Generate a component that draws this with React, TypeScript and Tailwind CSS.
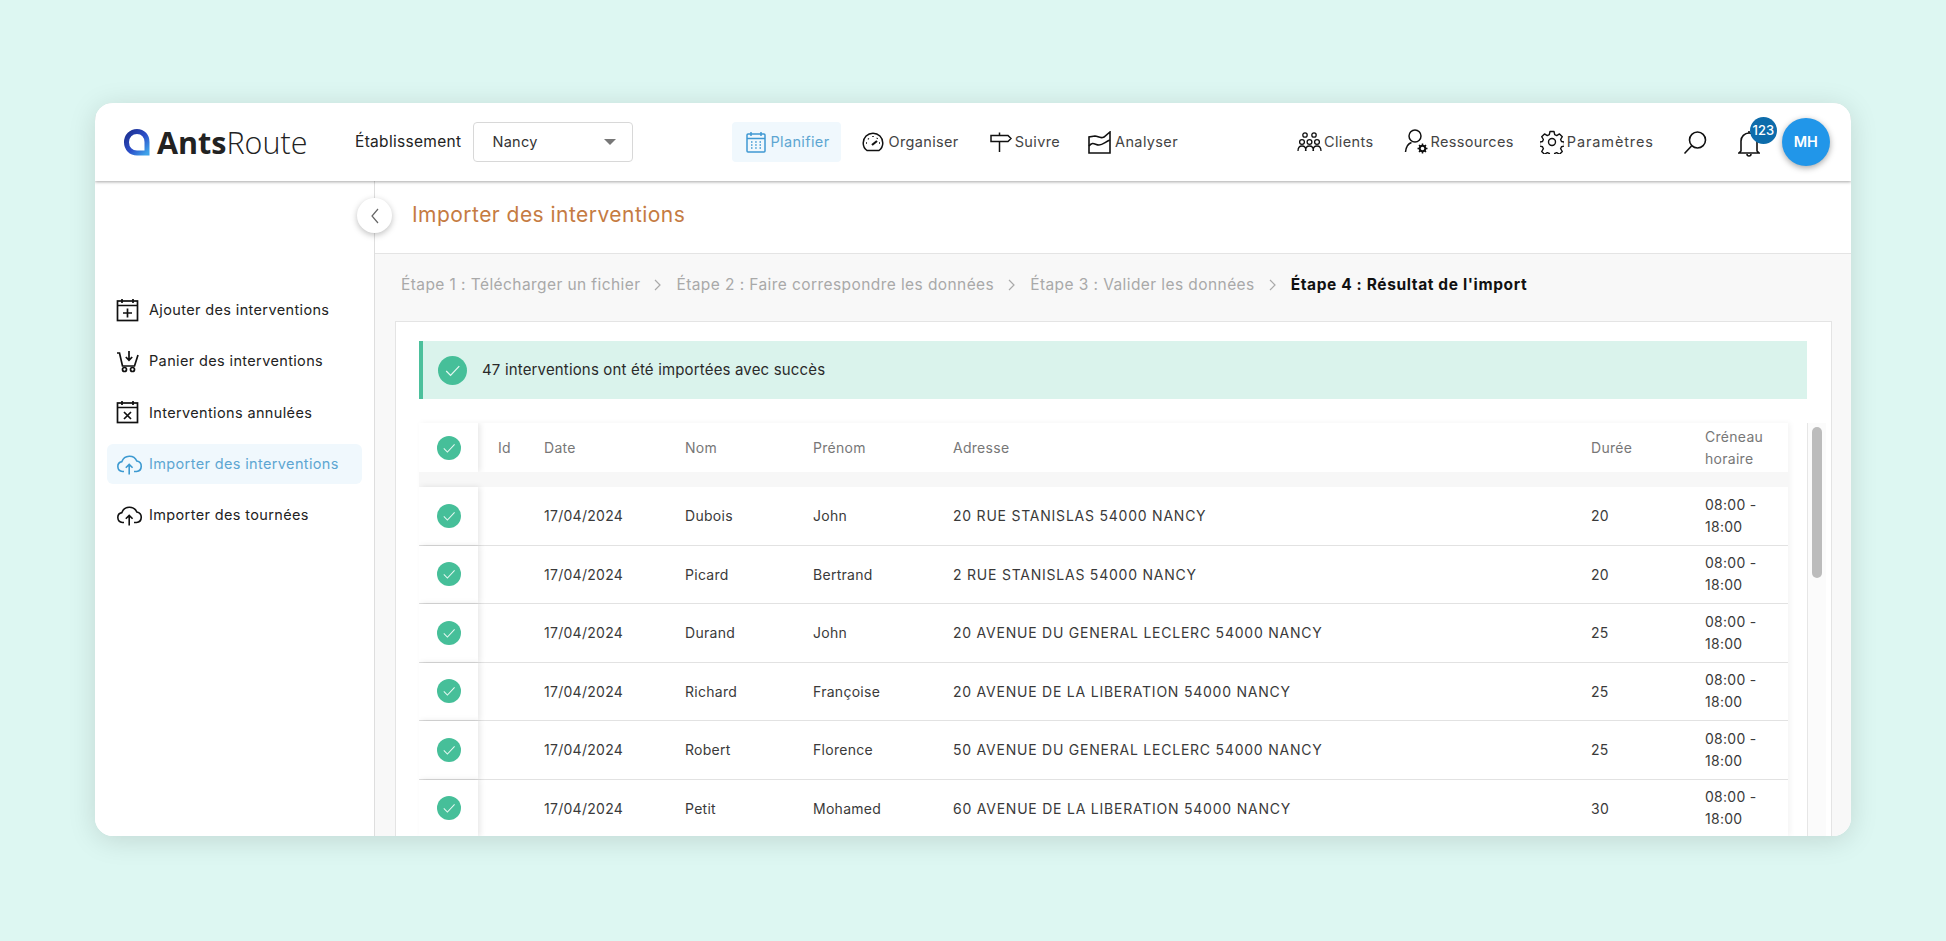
import React from "react";

const rows = [
  ["Dubois", "John", "20 RUE STANISLAS 54000 NANCY", "20"],
  ["Picard", "Bertrand", "2 RUE STANISLAS 54000 NANCY", "20"],
  ["Durand", "John", "20 AVENUE DU GENERAL LECLERC 54000 NANCY", "25"],
  ["Richard", "Françoise", "20 AVENUE DE LA LIBERATION 54000 NANCY", "25"],
  ["Robert", "Florence", "50 AVENUE DU GENERAL LECLERC 54000 NANCY", "25"],
  ["Petit", "Mohamed", "60 AVENUE DE LA LIBERATION 54000 NANCY", "30"],
];

function Check({ size }: { size: number }) {
  return (
    <svg width={size} height={size} viewBox="0 0 30 30" className="shrink-0">
      <circle cx="15" cy="15" r="15" fill="#46bf99" />
      <path d="M8.5 15.5l4.5 4.5 9-9.5" fill="none" stroke="#e6f8f2" strokeWidth="1.3" />
    </svg>
  );
}

function Logo() {
  return (
    <svg width="29" height="29" viewBox="0 0 29 29" className="shrink-0">
      <defs>
        <linearGradient id="lg" x1="0" y1="0" x2="1" y2="1">
          <stop offset="0" stopColor="#1c2f8f" />
          <stop offset="0.55" stopColor="#2c4fc9" />
          <stop offset="1" stopColor="#3fa3ea" />
        </linearGradient>
      </defs>
      <path
        d="M14 3.500c6 0 10 4.500 10 10.500v11H14C8 25 3.500 20.500 3.500 14.300 3.500 8 8 3.500 14 3.500z"
        fill="none"
        stroke="url(#lg)"
        strokeWidth="5"
      />
    </svg>
  );
}

const Cal = ({ children, color = "#111" }: { children: React.ReactNode; color?: string }) => (
  <svg width="23" height="24" viewBox="0 0 23 24" fill="none" stroke={color} strokeWidth="1.7" className="shrink-0">
    <rect x="1.500" y="3" width="20" height="19.500" />
    <path d="M1.500 7.500h20M6 1v4M17 1v4" />
    {children}
  </svg>
);

const CloudUp = ({ color }: { color: string }) => (
  <svg width="27" height="22" viewBox="0 0 27 22" fill="none" stroke={color} strokeWidth="1.6" className="shrink-0">
    <path d="M8 18.500H6.500a5 5 0 0 1-.6-9.900A8 8 0 0 1 20.800 8a5.300 5.300 0 0 1-.3 10.500H18" />
    <path d="M13.200 21.500V11.500M9.800 14.800l3.400-3.400 3.400 3.400" />
  </svg>
);

const sideItems: { label: string; icon: React.ReactNode; active?: boolean }[] = [
  { label: "Ajouter des interventions", icon: <Cal><path d="M11.500 10.500v9M7 15h9" /></Cal> },
  {
    label: "Panier des interventions",
    icon: (
      <svg width="24" height="24" viewBox="0 0 24 24" fill="none" stroke="#111" strokeWidth="1.7" className="shrink-0">
        <path d="M1 4h2.500l3 13h12l3.500-11" />
        <path d="M13 2v9M9.800 8l3.200 3.200L16.200 8" />
        <circle cx="8.500" cy="20.500" r="2" />
        <circle cx="16.500" cy="20.500" r="2" />
      </svg>
    ),
  },
  { label: "Interventions annulées", icon: <Cal><path d="M8 12l7 7M15 12l-7 7" /></Cal> },
  { label: "Importer des interventions", icon: <CloudUp color="#3d9ad1" />, active: true },
  { label: "Importer des tournées", icon: <CloudUp color="#111" /> },
];

const NavText = ({ children, className = "tracking-[0.025em] text-[#444]" }: { children: React.ReactNode; className?: string }) => (
  <span className={`text-[14.500px] ${className}`}>{children}</span>
);

function Header() {
  return (
    <header className="relative z-20 flex h-[78px] shrink-0 items-center bg-white pl-[28px] shadow-[0_1px_3px_rgba(0,0,0,0.35)]">
      <div className="flex w-[232px] items-center gap-[5px]">
        <Logo />
        <span className="font-['Open_Sans',sans-serif] text-[30.500px] leading-none text-[#222]">
          <span className="font-bold">Ants</span>
          <span className="font-light">Route</span>
        </span>
      </div>
      <span className="text-[15.500px] tracking-[0.02em] text-[#222]">Établissement</span>
      <div className="ml-[12px] flex h-[40px] w-[160px] items-center justify-between rounded border border-[#d8d8d8] pl-[18px] pr-[16px] text-[14.500px] tracking-[0.02em] text-[#333]">
        Nancy
        <span className="h-0 w-0 border-x-[6px] border-t-[6px] border-x-transparent border-t-[#777]" />
      </div>
      <div className="ml-[99px] flex h-[40px] w-[109px] items-center gap-[4px] rounded bg-[#f0f8fd] pl-[14px]">
        <svg width="20" height="22" viewBox="0 0 20 22" fill="none" stroke="#3f98d2" strokeWidth="1.500" className="shrink-0">
          <rect x="1" y="3" width="18" height="18" rx="1" />
          <path d="M1 7.500h18M5 1v4M15 1v4" />
          <path d="M5 11h1.500M9.200 11h1.500M13.500 11h1.500M5 14h1.500M9.200 14h1.500M13.500 14h1.500M5 17h1.500M9.200 17h1.500M13.500 17h1.500" />
        </svg>
        <NavText className="tracking-[0.025em] text-[#5da6d2]">Planifier</NavText>
      </div>
      <div className="ml-[21px] flex items-center gap-[4px]">
        <svg width="22" height="20" viewBox="0 0 22 20" fill="none" stroke="#111" strokeWidth="1.500" className="shrink-0">
          <path d="M5 18.500h12c2-1.500 3.800-4 3.800-7.500a9.800 9.800 0 0 0-19.600 0c0 3.500 1.700 6 3.800 7.500z" />
          <path d="M10 13l5-4" strokeWidth="2.200" />
          <path d="M4 11h1M17 11h1M6 6.500l.8.800M11 4v1M15.500 6l-.6.800" />
        </svg>
        <NavText>Organiser</NavText>
      </div>
      <div className="ml-[31px] flex items-center gap-[3px]">
        <svg width="22" height="22" viewBox="0 0 22 22" fill="none" stroke="#111" strokeWidth="1.500" className="shrink-0">
          <path d="M1 4.500h17l3 3-3 3H1z" />
          <path d="M9.500 1.500v3M9.500 10.500V21" />
        </svg>
        <NavText>Suivre</NavText>
      </div>
      <div className="ml-[28px] flex items-center gap-[4px]">
        <svg width="23" height="23" viewBox="0 0 23 23" fill="none" stroke="#111" strokeWidth="1.600" className="shrink-0">
          <path d="M1 6v16h21V1L16 6c-4 2-6-1-9-1z" />
          <path d="M1 15c4-5 6-1 10-1s6-3 11-5" />
        </svg>
        <NavText>Analyser</NavText>
      </div>
      <div className="ml-[119px] flex items-center gap-[2px]">
        <svg width="25" height="20" viewBox="0 0 25 20" fill="none" stroke="#111" strokeWidth="1.300" className="shrink-0">
          <circle cx="8" cy="3" r="2.200" />
          <circle cx="17" cy="3" r="2.200" />
          <circle cx="5" cy="10" r="2.400" />
          <circle cx="12.500" cy="10" r="2.400" />
          <circle cx="20" cy="10" r="2.400" />
          <path d="M1 19c0-3 1.500-5 4-5s4 2 4 5M8.500 19c0-3 1.500-5 4-5s4 2 4 5M16 19c0-3 1.500-5 4-5s4 2 4 5" />
        </svg>
        <NavText>Clients</NavText>
      </div>
      <div className="ml-[31px] flex items-center gap-0">
        <svg width="26" height="28" viewBox="0 0 26 28" fill="none" stroke="#111" strokeWidth="1.500" className="shrink-0">
          <circle cx="11" cy="8" r="6" />
          <path d="M1.500 24c.5-5 3-8.500 6-9.500" />
          <circle cx="18.500" cy="20.500" r="2.800" strokeWidth="2" />
          <path d="M18.500 15.500v2M18.500 23.500v2M13.500 20.500h2M21.500 20.500h2M15 17l1.400 1.400M20.600 22.600L22 24M15 24l1.400-1.400M20.600 18.400L22 17" />
        </svg>
        <NavText>Ressources</NavText>
      </div>
      <div className="ml-[26px] flex items-center gap-[3px]">
        <svg width="24" height="24" viewBox="0 0 24 24" fill="none" stroke="#111" strokeWidth="1.400" strokeLinejoin="round" className="shrink-0">
          <circle cx="12" cy="12" r="3.500" />
          <path d="M10 1.500h4l.7 3.200 2 .9 2.800-1.700 2.800 2.800-1.700 2.800.9 2 3 .7v3.800l-3 .7-.9 2 1.700 2.800-2.800 2.800-2.800-1.700-2 .9-.7 3.200h-4l-.7-3.200-2-.9-2.800 1.700-2.800-2.800 1.700-2.800-.9-2-3-.7v-3.800l3-.7.9-2-1.700-2.800 2.800-2.800 2.800 1.700 2-.9z" />
        </svg>
        <NavText className="tracking-[0.06em] text-[#444]">Paramètres</NavText>
      </div>
      <svg width="25" height="25" viewBox="0 0 25 25" fill="none" stroke="#111" strokeWidth="1.600" className="ml-[29px] shrink-0">
        <circle cx="14.500" cy="10" r="8" />
        <path d="M8.500 16L1.500 23.500" />
      </svg>
      <div className="relative ml-[30px] h-[28px] w-[22px] shrink-0">
        <svg width="22" height="28" viewBox="0 0 22 28" fill="none" stroke="#111" strokeWidth="1.600" className="mt-[2px]">
          <path d="M3 21V11a8 8 0 0 1 16 0v10l2 2H1z" />
          <path d="M11 1v2M9 24a2 2 0 0 0 4 0" />
        </svg>
        <span className="absolute left-[12px] top-[-11px] flex h-[27px] w-[27px] items-center justify-center rounded-full bg-[#0d6cab] text-[13px] font-medium text-white">
          123
        </span>
      </div>
      <div className="ml-[22px] flex h-[48px] w-[48px] shrink-0 items-center justify-center rounded-full bg-[#2196e9] text-[14.500px] font-semibold text-white shadow-[0_2px_6px_rgba(0,0,0,0.35)]">
        MH
      </div>
    </header>
  );
}

function Sidebar() {
  return (
    <aside className="flex w-[280px] shrink-0 flex-col gap-[11.200px] border-r border-[#dedede] bg-white pl-[12px] pr-[12px] pt-[109px]">
      {sideItems.map((it) => (
        <div
          key={it.label}
          className={`flex h-[40px] items-center rounded-md pl-[9px] ${it.active ? "bg-[#f0f8fd]" : ""}`}
        >
          <span className="flex w-[33px] shrink-0 items-center">{it.icon}</span>
          <span className={`whitespace-nowrap text-[14.500px] tracking-[0.025em] ${it.active ? "text-[#5da6d2]" : "text-[#222]"}`}>
            {it.label}
          </span>
        </div>
      ))}
    </aside>
  );
}

const Chevron = () => (
  <svg width="12" height="14" viewBox="0 0 12 14" fill="none" stroke="#aaa" strokeWidth="1.200" className="shrink-0">
    <path d="M3 2l5 5-5 5" />
  </svg>
);

const Row = ({ head, cols }: { head?: boolean; cols: React.ReactNode[] }) => (
  <div className={`flex shrink-0 items-center ${head ? "h-[49px] text-[#777]" : "h-[58.500px] border-b border-[#e2e2e2] text-[#3a3a3a]"}`}>
    <div className="flex h-full w-[59px] shrink-0 items-center justify-center bg-white shadow-[2px_0_6px_rgba(0,0,0,0.1)]">
      <Check size={24} />
    </div>
    <div className="w-[66px] shrink-0 pl-[20px]">{cols[0]}</div>
    <div className="w-[141px] shrink-0">{cols[1]}</div>
    <div className="w-[128px] shrink-0">{cols[2]}</div>
    <div className="w-[140px] shrink-0">{cols[3]}</div>
    <div className={`w-[638px] shrink-0 whitespace-nowrap ${head ? "" : "tracking-[0.055em]"}`}>{cols[4]}</div>
    <div className="w-[114px] shrink-0">{cols[5]}</div>
    <div className="w-[83px] shrink-0 leading-[22px]">{cols[6]}</div>
  </div>
);

export default function App() {
  return (
    <div className="h-[941px] w-full overflow-hidden bg-[#ddf7f2] pl-[95px] pt-[103px] font-[Inter,sans-serif]">
      <div className="flex h-[733px] w-[1756px] flex-col overflow-hidden rounded-[18px] bg-white shadow-[0_4px_28px_rgba(0,0,0,0.13)]">
        <Header />
        <div className="flex min-h-0 flex-1">
          <Sidebar />
          <main className="relative flex min-w-0 flex-1 flex-col">
            <button className="absolute left-[-18px] top-[17px] z-10 flex h-[35px] w-[35px] items-center justify-center rounded-full bg-white shadow-[0_2px_6px_rgba(0,0,0,0.25)]">
              <svg width="10" height="16" viewBox="0 0 10 16" fill="none" stroke="#666" strokeWidth="1.200">
                <path d="M8 1L2 8l6 7" />
              </svg>
            </button>
            <div className="flex h-[73px] shrink-0 items-center border-b border-[#e4e4e4] bg-white pb-[5px] pl-[37px] text-[21px] tracking-[0.022em] text-[#c57b42]">
              Importer des interventions
            </div>
            <div className="flex min-h-0 flex-1 flex-col bg-[#f8f8f8] pl-[20px] pr-[19px]">
              <div className="flex h-[67px] shrink-0 items-center whitespace-nowrap pb-[5px] pl-[6px] text-[15.500px] tracking-[0.027em] text-[#a9a9a9]">
                <span>Étape 1 : Télécharger un fichier</span>
                <span className="mx-[12px]"><Chevron /></span>
                <span>Étape 2 : Faire correspondre les données</span>
                <span className="mx-[12px]"><Chevron /></span>
                <span>Étape 3 : Valider les données</span>
                <span className="mx-[12px]"><Chevron /></span>
                <span className="font-bold tracking-[0.04em] text-[#111]">Étape 4 : Résultat de l'import</span>
              </div>
              <section className="flex min-h-0 flex-1 flex-col border-x border-t border-[#e4e4e4] bg-white pl-[23px] pr-[24px] pt-[19px]">
                <div className="flex h-[58px] shrink-0 items-center border-l-4 border-[#4cc09c] bg-[#daf3ec] pl-[15px] text-[15px] tracking-[0.011em] text-[#2a2a2a]">
                  <Check size={29} />
                  <span className="ml-[15px]">47 interventions ont été importées avec succès</span>
                </div>
                <div className="mt-[24px] flex min-h-0 flex-1">
                  <div className="flex w-[1369px] shrink-0 flex-col overflow-hidden text-[14px] tracking-[0.02em] shadow-[2px_0_6px_rgba(0,0,0,0.05)]">
                    <Row head cols={["Id", "Date", "Nom", "Prénom", "Adresse", "Durée", <>Créneau<br />horaire</>]} />
                    <div className="h-[15px] shrink-0 bg-[#f7f7f7]" />
                    {rows.map((r) => (
                      <Row key={r[0]} cols={["", "17/04/2024", r[0], r[1], r[2], r[3], <>08:00 -<br />18:00</>]} />
                    ))}
                  </div>
                  <div className="ml-[19px] flex w-[19px] shrink-0 justify-center border-l border-[#e6e6e6] bg-[#fbfbfb] pt-[4px]">
                    <div className="h-[151px] w-[10px] rounded-full bg-[#bcbcbc]" />
                  </div>
                </div>
              </section>
            </div>
          </main>
        </div>
      </div>
    </div>
  );
}
